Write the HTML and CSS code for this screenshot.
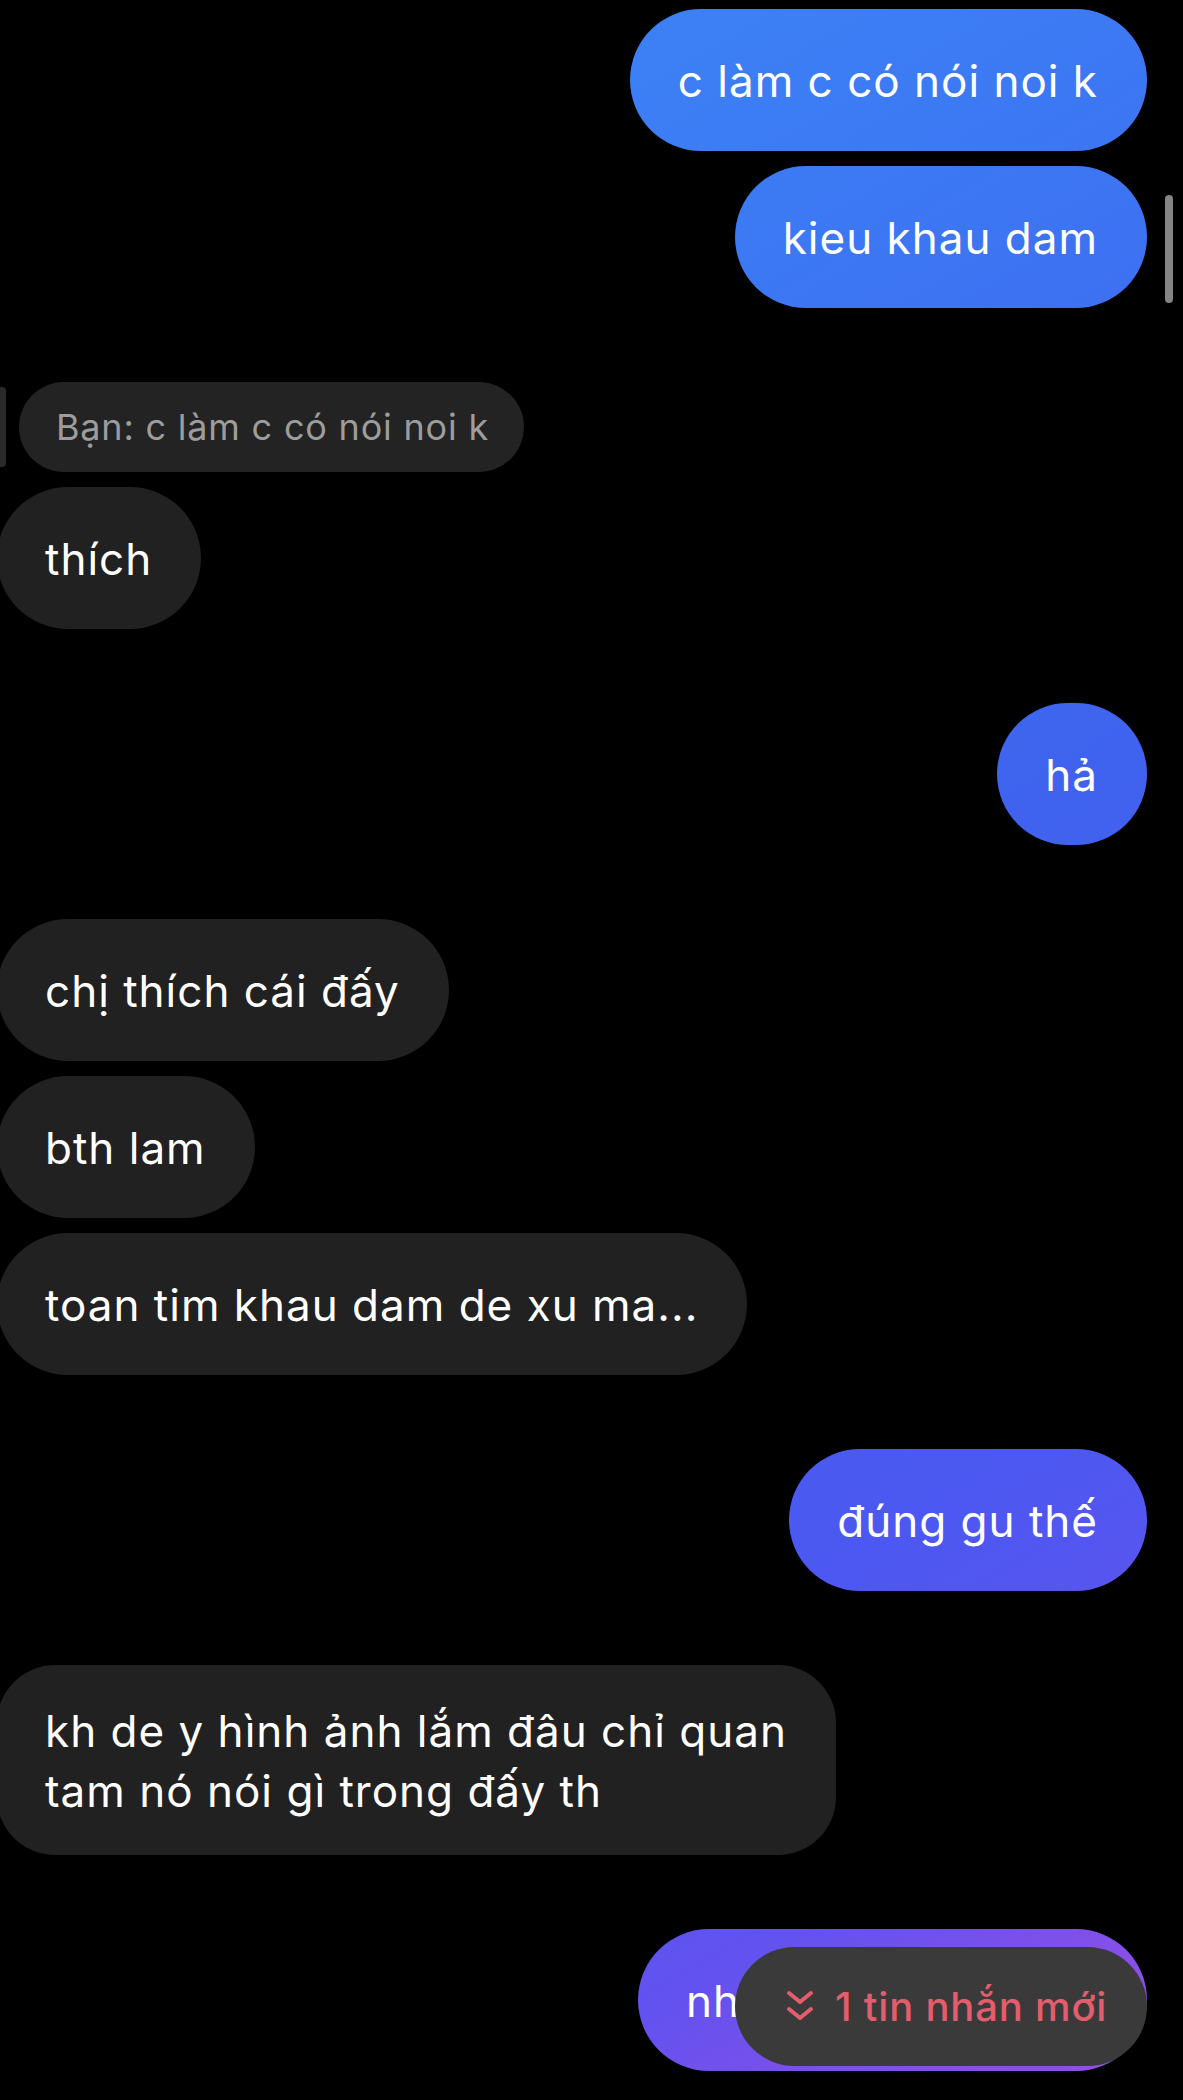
FILE: index.html
```html
<!DOCTYPE html>
<html lang="vi">
<head>
    <meta charset="UTF-8">
    <meta name="viewport" content="width=device-width, initial-scale=1.0">
    <title>Tin nhắn</title>
    <link rel="stylesheet" href="styles.css">
</head>
<body>
    <div class="chat">
        <div class="group sent">
            <div class="msg">c làm c có nói noi k</div>
            <div class="msg">kieu khau dam</div>
        </div>

        <div class="group recv">
            <div class="reply">
                <span class="reply-bar"></span>
                <div class="reply-text">Bạn: c làm c có nói noi k</div>
            </div>
            <div class="msg">thích</div>
        </div>

        <div class="group sent">
            <div class="msg">hả</div>
        </div>

        <div class="group recv">
            <div class="msg">chị thích cái đấy</div>
            <div class="msg">bth lam</div>
            <div class="msg">toan tim khau dam de xu ma...</div>
        </div>

        <div class="group sent">
            <div class="msg">đúng gu thế</div>
        </div>

        <div class="group recv">
            <div class="msg multi">kh de y hình ảnh lắm đâu chỉ quan<br>tam nó nói gì trong đấy th</div>
        </div>

        <div class="group sent last">
            <div class="msg msg-cut">nh</div>
            <button class="new-msgs">
                <svg class="new-msgs-icon" viewBox="0 0 28 36" fill="none" stroke="currentColor" stroke-width="4" stroke-linecap="round" stroke-linejoin="round">
                    <path d="M3 4l11 9 11-9"/>
                    <path d="M3 20l11 9 11-9"/>
                </svg>
                <span>1 tin nhắn mới</span>
            </button>
        </div>
    </div>

    <div class="scrollbar"></div>
</body>
</html>
```

FILE: styles.css
```css
body {
    margin: 0;
    background-color: #000;
    color: #fff;
    font-family: Inter, "Noto Sans", sans-serif;
}
.chat {
    display: flex;
    flex-direction: column;
    gap: 74px;
    padding: 9px 36px 0 0;
}
.group {
    display: flex;
    flex-direction: column;
    gap: 15px;
}
.sent {
    align-items: flex-end;
}
.recv {
    align-items: flex-start;
}
.msg {
    box-sizing: border-box;
    padding: 42px 49px 40px 48px;
    font-size: 44px;
    letter-spacing: 1px;
    line-height: 60px;
    border-radius: 71px;
    white-space: nowrap;
}
.sent .msg {
    background: linear-gradient(150deg, #3f89f7 0%, #3c7bf4 22%, #3f63ee 50%, #4c58f1 74%, #6352ef 86%, #884fe8 94%, #9a4de4 100%) fixed;
}
.recv .msg {
    background-color: #212121;
    margin-left: -3px;
}
.msg.multi {
    padding-top: 36px;
    padding-bottom: 34px;
    border-radius: 58px;
}
.msg-cut {
    width: 509px;
}
.reply {
    display: flex;
    align-items: center;
    gap: 13px;
}
.reply-bar {
    width: 6px;
    height: 80px;
    background-color: #292929;
    border-radius: 0 4px 4px 0;
}
.reply-text {
    background-color: #232323;
    color: #9d9d9d;
    font-size: 36px;
    letter-spacing: 0.8px;
    line-height: 50px;
    padding: 20px 35px 20px 37px;
    border-radius: 45px;
}
.last {
    position: relative;
}
.new-msgs {
    position: absolute;
    top: 18px;
    right: 0;
    width: 412px;
    height: 119px;
    box-sizing: border-box;
    display: flex;
    align-items: center;
    gap: 21px;
    padding: 0 0 0 51px;
    border: none;
    border-radius: 60px;
    background-color: #3a3a3a;
    color: #e35d6d;
    font-family: Inter, "Noto Sans", sans-serif;
    font-size: 40px;
    font-weight: 500;
    letter-spacing: 0.8px;
    cursor: pointer;
}
.new-msgs-icon {
    width: 28px;
    height: 36px;
}
.scrollbar {
    position: absolute;
    top: 195px;
    right: 10px;
    width: 8px;
    height: 108px;
    background-color: #858585;
    border-radius: 4px;
}
```
